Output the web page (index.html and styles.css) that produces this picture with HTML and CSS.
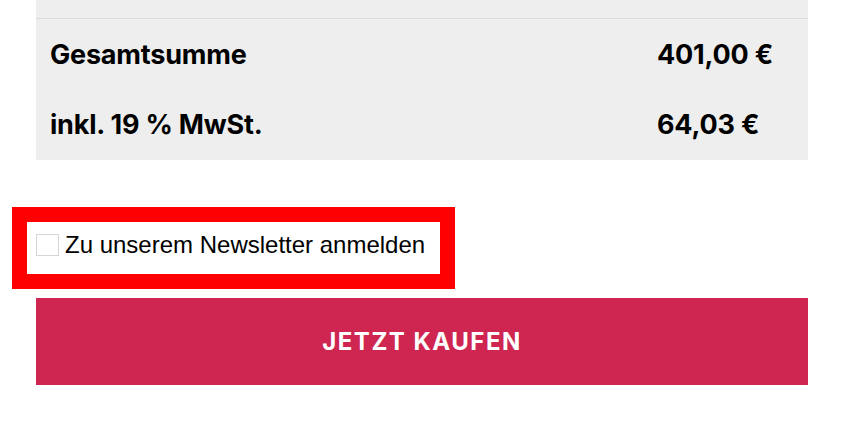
FILE: index.html
```html
<!DOCTYPE html>
<html lang="de">
<head>
    <meta charset="UTF-8">
    <meta name="viewport" content="width=device-width, initial-scale=1.0">
    <title>Kasse</title>
    <link rel="stylesheet" href="styles.css">
</head>
<body>
    <div class="checkout">
        <div class="totals">
            <div class="totals-row totals-head"></div>
            <div class="totals-row">
                <span class="label">Gesamtsumme</span>
                <span class="value">401,00 €</span>
            </div>
            <div class="totals-row">
                <span class="label">inkl. 19 % MwSt.</span>
                <span class="value">64,03 €</span>
            </div>
        </div>

        <div class="highlight">
            <label class="newsletter">
                <input type="checkbox" name="newsletter">
                <span>Zu unserem Newsletter anmelden</span>
            </label>
        </div>

        <button type="submit" class="buy">JETZT KAUFEN</button>
    </div>
</body>
</html>
```

FILE: styles.css
```css
body {
    margin: 0;
    padding: 0;
    background: #fff;
    color: #000;
    font-family: 'Inter', sans-serif;
}

.checkout {
    width: 772px;
    margin-left: 36px;
}

.totals {
    background: #eeeeee;
    padding-bottom: 1px;
}

.totals-row {
    display: grid;
    grid-template-columns: 1fr 151px;
    align-items: center;
    height: 70px;
    font-size: 27px;
    font-weight: 700;
    letter-spacing: -0.2px;
}

.totals-head {
    height: 18px;
    border-bottom: 1px solid #dcdcdc;
}

.label {
    padding-left: 14px;
}

.highlight {
    margin: 47px 0 9px -24px;
    border: 15px solid #ff0000;
    width: 413px;
    height: 52px;
    background: #fff;
}

.newsletter {
    display: flex;
    align-items: flex-start;
    gap: 6px;
    padding: 12px 0 0 9px;
    font-family: 'Liberation Sans', Arial, sans-serif;
    font-size: 24px;
    line-height: 21px;
    cursor: pointer;
}

.newsletter input {
    appearance: none;
    margin: 0;
    width: 23px;
    height: 22px;
    border: 1px solid #d6d6d6;
    background: #fff;
}

.buy {
    display: block;
    width: 100%;
    height: 87px;
    border: none;
    background: #ce2651;
    color: #fff;
    font-family: 'Inter', sans-serif;
    font-size: 24px;
    font-weight: 700;
    letter-spacing: 1.5px;
    cursor: pointer;
}
```
